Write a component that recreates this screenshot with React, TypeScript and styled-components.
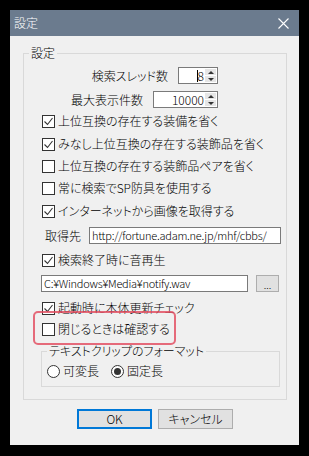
import React from 'react'
import styled, { createGlobalStyle } from 'styled-components'

const GlobalStyle = createGlobalStyle`
  html, body { margin: 0; padding: 0; background: #000; }
  body {
    font-family: "Noto Sans CJK JP", "Noto Sans", sans-serif;
    font-size: 12px;
    font-weight: 300;
    color: #000;
    font-feature-settings: "palt";
  }
  * { box-sizing: border-box; }
`

const Screen = styled.div`
  width: 309px;
  height: 456px;
  padding: 10px 0 0 10px;
  background: #000;
`

const Window = styled.div`
  position: relative;
  width: 289px;
  height: 435px;
  background: #f0f0f0;
  display: flex;
  flex-direction: column;
`

const TitleBar = styled.div`
  height: 26px;
  flex: none;
  background: #6b7b8e;
  color: #fff;
  display: flex;
  align-items: center;
  justify-content: space-between;
  padding: 0 10px 0 4px;
  line-height: 14px;
`

const Body = styled.div`
  padding: 10px 12px 0 13px;
  display: flex;
  flex-direction: column;
`

const Group = styled.fieldset<{ $pt: number; $pb: number }>`
  margin: 0;
  min-width: 0;
  border: 1px solid #d9d9d9;
  padding: ${p => p.$pt}px 6px ${p => p.$pb}px 5px;
`

const Legend = styled.legend`
  padding: 0 2px;
  line-height: 14px;
  font-size: 12px;
`

const Content = styled.div`
  display: flex;
  flex-direction: column;
  padding-left: 12px;
`

const SpinRow = styled.div<{ $mt: number }>`
  display: flex;
  justify-content: flex-end;
  align-items: center;
  gap: 10px;
  height: 17px;
  margin-top: ${p => p.$mt}px;
  margin-right: 62px;
  white-space: nowrap;
`

const SpinBox = styled.div<{ $w: number }>`
  width: ${p => p.$w}px;
  height: 17px;
  border: 1px solid #7a7a7a;
  background: #fff;
  display: flex;
  align-items: center;
  justify-content: flex-end;
  padding: 0 1px 0 2px;
  line-height: 14px;
`

const SpinValue = styled.span`
  display: flex;
  align-items: center;
  margin-right: 1px;
`

const Caret = styled.span`
  width: 1px;
  height: 12px;
  background: #000;
`

const Arrows = styled.div`
  width: 11px;
  height: 13px;
  display: flex;
  flex-direction: column;
  gap: 1px;
`

const ArrowHalf = styled.div<{ $up?: boolean }>`
  flex: 1;
  background: #e6e6e6;
  display: flex;
  align-items: center;
  justify-content: center;
  &::after {
    content: '';
    border-left: 3px solid transparent;
    border-right: 3px solid transparent;
    ${p => (p.$up ? 'border-bottom: 3px solid #333;' : 'border-top: 3px solid #333;')}
  }
`

const CheckRow = styled.label<{ $mt: number }>`
  display: flex;
  align-items: center;
  gap: 3px;
  height: 18px;
  margin-top: ${p => p.$mt}px;
  padding-left: 1px;
  white-space: nowrap;
  line-height: 14px;
`

const Box = styled.span`
  width: 13px;
  height: 13px;
  flex: none;
  border: 1px solid #333;
  background: #fff;
  display: flex;
  align-items: center;
  justify-content: center;
`

const FieldRow = styled.div<{ $mt: number; $gap: number }>`
  display: flex;
  align-items: center;
  gap: ${p => p.$gap}px;
  height: 17px;
  margin-top: ${p => p.$mt}px;
  white-space: nowrap;
`

const FieldLabel = styled.span`
  padding-left: 4px;
  line-height: 14px;
`

const TextBox = styled.div<{ $w: number }>`
  width: ${p => p.$w}px;
  height: 17px;
  flex: none;
  border: 1px solid #7a7a7a;
  background: #fff;
  padding: 0 2px;
  font-size: 11px;
  letter-spacing: -0.25px;
  line-height: 15px;
  overflow: hidden;
  white-space: nowrap;
`

const SmallButton = styled.div`
  width: 23px;
  height: 17px;
  border: 1px solid #adadad;
  background: #e1e1e1;
  display: flex;
  align-items: flex-end;
  justify-content: center;
  font-size: 10px;
  line-height: 12px;
`

const InnerGroup = styled(Group)`
  margin-top: 6px;
`

const RadioRow = styled.div`
  display: flex;
  align-items: center;
  height: 18px;
`

const Radio = styled.label<{ $ml: number }>`
  display: flex;
  align-items: center;
  gap: 3px;
  margin-left: ${p => p.$ml}px;
  line-height: 14px;
`

const Circle = styled.span<{ $on?: boolean }>`
  width: 13px;
  height: 13px;
  border: 1px solid #333;
  border-radius: 50%;
  background: #fff;
  display: flex;
  align-items: center;
  justify-content: center;
  &::after {
    content: '';
    width: 7px;
    height: 7px;
    border-radius: 50%;
    background: ${p => (p.$on ? '#333' : 'transparent')};
  }
`

const ButtonRow = styled.div`
  display: flex;
  justify-content: center;
  gap: 6px;
  margin-top: 9px;
`

const DialogButton = styled.div<{ $primary?: boolean }>`
  width: 75px;
  height: 20px;
  background: #e1e1e1;
  border: ${p => (p.$primary ? '2px solid #0078d7' : '1px solid #adadad')};
  display: flex;
  align-items: center;
  justify-content: center;
  line-height: 14px;
`

const Highlight = styled.div`
  position: absolute;
  left: 23px;
  top: 301px;
  width: 143px;
  height: 34px;
  border: 2px solid rgba(226, 72, 92, 0.8);
  border-radius: 5px;
  filter: blur(0.5px);
  pointer-events: none;
`

const Check = ({ on }: { on: boolean }) => (
  <Box>
    {on && (
      <svg width="11" height="11" viewBox="0 0 11 11">
        <polyline points="1.5,5.5 4.5,8.5 9.5,2" fill="none" stroke="#333" strokeWidth="1.1" />
      </svg>
    )}
  </Box>
)

const checks: { text: string; on: boolean; mt: number }[] = [
  { text: '上位互換の存在する装備を省く', on: true, mt: 4 },
  { text: 'みなし上位互換の存在する装飾品を省く', on: true, mt: 5 },
  { text: '上位互換の存在する装飾品ペアを省く', on: false, mt: 4 },
  { text: '常に検索でSP防具を使用する', on: false, mt: 4 },
  { text: 'インターネットから画像を取得する', on: true, mt: 5 },
]

export default function App() {
  return (
    <>
      <GlobalStyle />
      <Screen>
        <Window>
          <TitleBar>
            <span>設定</span>
            <svg width="11" height="11" viewBox="0 0 11 11">
              <path d="M0.5 0.5 L10.5 10.5 M10.5 0.5 L0.5 10.5" stroke="#fff" strokeWidth="1.1" />
            </svg>
          </TitleBar>
          <Body>
            <Group $pt={7} $pb={12}>
              <Legend>設定</Legend>
              <Content>
                <SpinRow $mt={0}>
                  <span>検索スレッド数</span>
                  <SpinBox $w={40}>
                    <SpinValue><Caret />8</SpinValue>
                    <Arrows><ArrowHalf $up /><ArrowHalf /></Arrows>
                  </SpinBox>
                </SpinRow>
                <SpinRow $mt={7}>
                  <span>最大表示件数</span>
                  <SpinBox $w={65}>
                    <SpinValue>10000</SpinValue>
                    <Arrows><ArrowHalf $up /><ArrowHalf /></Arrows>
                  </SpinBox>
                </SpinRow>
                {checks.map(c => (
                  <CheckRow key={c.text} $mt={c.mt}>
                    <Check on={c.on} />
                    <span>{c.text}</span>
                  </CheckRow>
                ))}
                <FieldRow $mt={7} $gap={8}>
                  <FieldLabel>取得先</FieldLabel>
                  <TextBox $w={192}>http://fortune.adam.ne.jp/mhf/cbbs/</TextBox>
                </FieldRow>
                <CheckRow $mt={7}>
                  <Check on />
                  <span>検索終了時に音再生</span>
                </CheckRow>
                <FieldRow $mt={6} $gap={8}>
                  <TextBox $w={207}>C:¥Windows¥Media¥notify.wav</TextBox>
                  <SmallButton>...</SmallButton>
                </FieldRow>
                <CheckRow $mt={7}>
                  <Check on />
                  <span>起動時に本体更新チェック</span>
                </CheckRow>
                <CheckRow $mt={3}>
                  <Check on={false} />
                  <span>閉じるときは確認する</span>
                </CheckRow>
                <InnerGroup $pt={4} $pb={6}>
                  <Legend>テキストクリップのフォーマット</Legend>
                  <RadioRow>
                    <Radio $ml={0}>
                      <Circle />
                      <span>可変長</span>
                    </Radio>
                    <Radio $ml={12}>
                      <Circle $on />
                      <span>固定長</span>
                    </Radio>
                  </RadioRow>
                </InnerGroup>
              </Content>
            </Group>
            <ButtonRow>
              <DialogButton $primary>OK</DialogButton>
              <DialogButton>キャンセル</DialogButton>
            </ButtonRow>
          </Body>
          <Highlight />
        </Window>
      </Screen>
    </>
  )
}
